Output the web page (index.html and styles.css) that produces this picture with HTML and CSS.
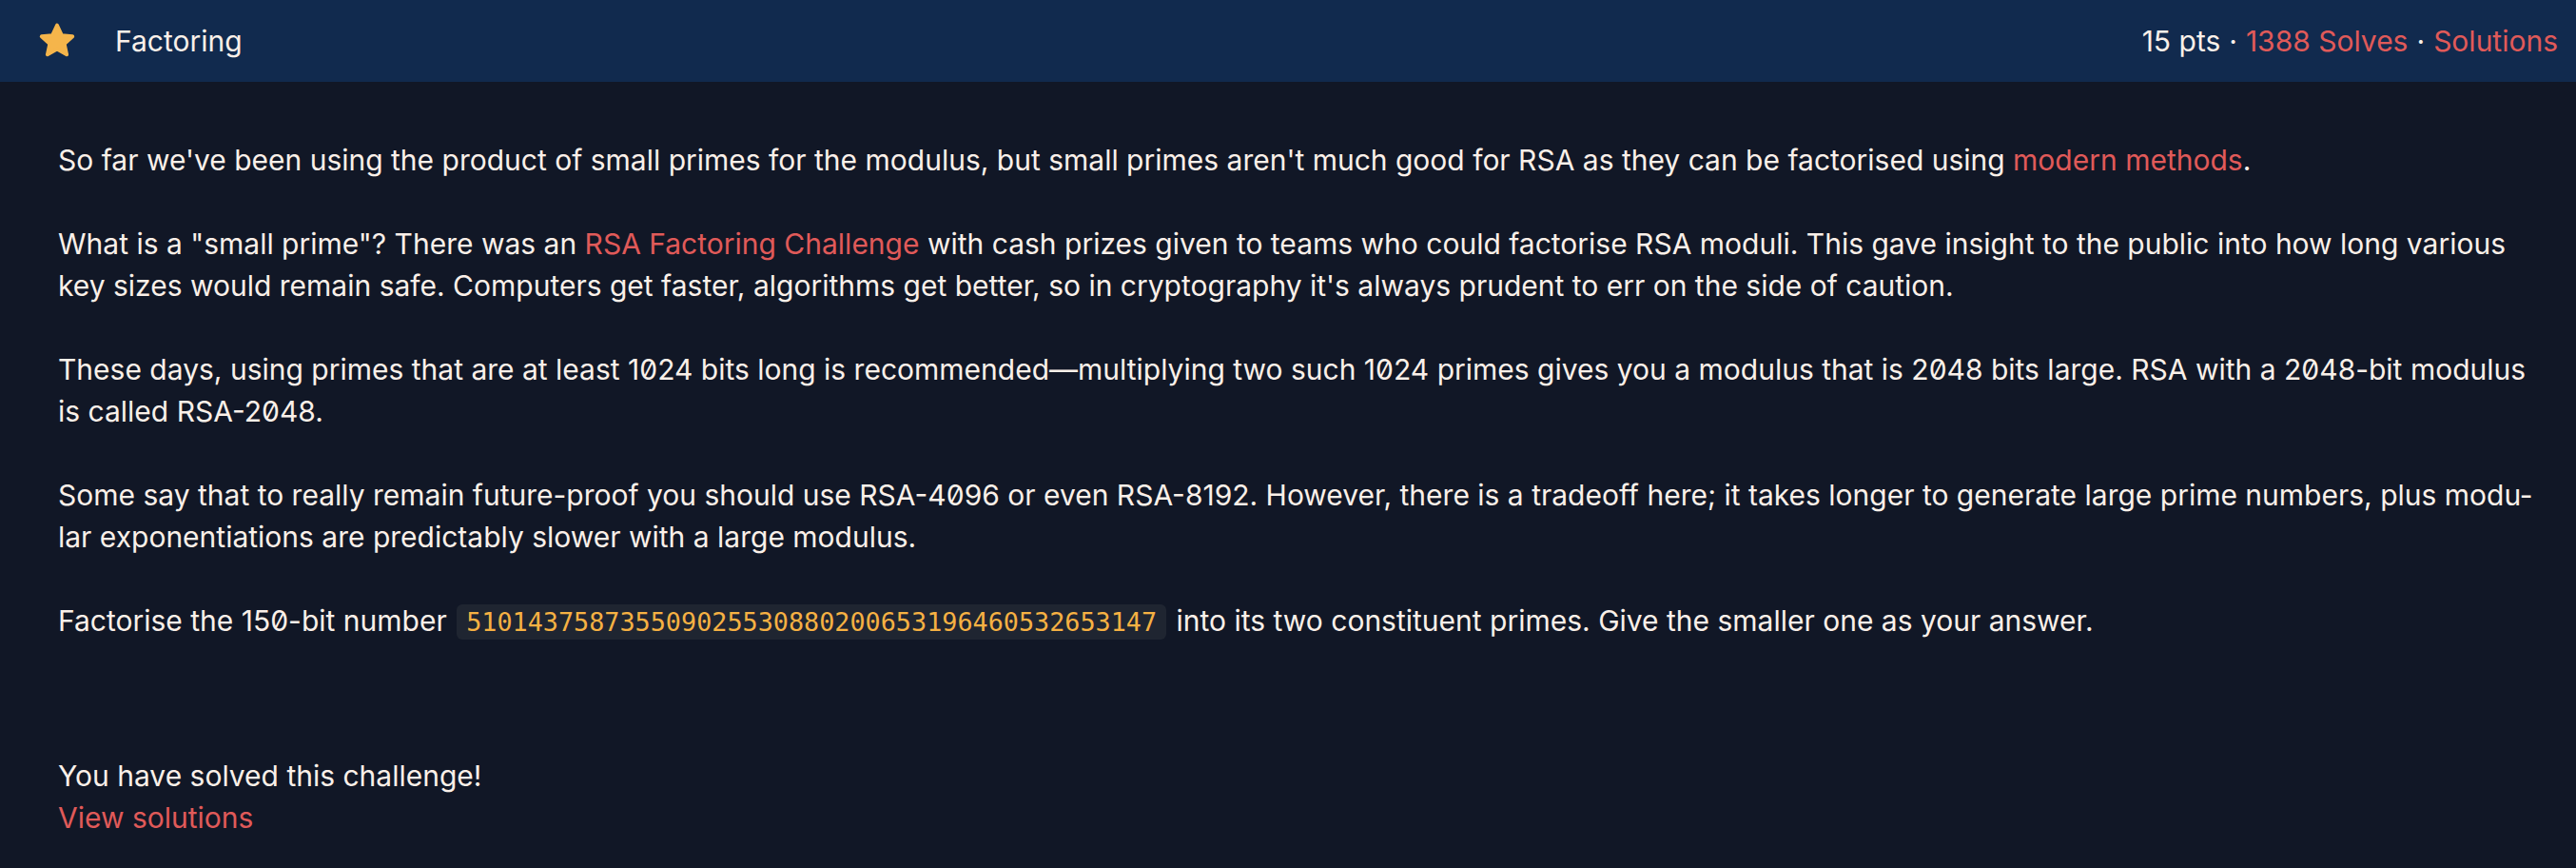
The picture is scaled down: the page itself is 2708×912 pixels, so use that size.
FILE: index.html
```html
<!DOCTYPE html>
<html lang="en">
<head>
<meta charset="utf-8">
<title>Factoring</title>
<link rel="stylesheet" href="styles.css">
</head>
<body>
<div class="card">
  <header class="card-header">
    <div class="title-group">
      <svg class="star" viewBox="0 0 24 24" aria-hidden="true">
        <polygon points="12,2.6 14.8,8.6 21.3,9.3 16.4,13.7 17.8,20.2 12,16.9 6.2,20.2 7.6,13.7 2.7,9.3 9.2,8.6" fill="#f5b54b" stroke="#f5b54b" stroke-width="2.2" stroke-linejoin="round"/>
      </svg>
      <span class="title">Factoring</span>
    </div>
    <div class="meta">
      <span>15 pts</span>
      <span class="dot">·</span>
      <a href="#" class="link">1388 Solves</a>
      <span class="dot">·</span>
      <a href="#" class="link">Solutions</a>
    </div>
  </header>
  <main class="card-body">
    <div class="description">
      <p>So far we've been using the product of small primes for the modulus, but small primes aren't much good for RSA as they can be factorised using <a href="#" class="link">modern methods</a>.</p>
      <p>What is a "small prime"? There was an <a href="#" class="link">RSA Factoring Challenge</a> with cash prizes given to teams who could factorise RSA moduli. This gave insight to the public into how long various key sizes would remain safe. Computers get faster, algorithms get better, so in cryptography it's always prudent to err on the side of caution.</p>
      <p>These days, using primes that are at least 1024 bits long is recommended—multiplying two such 1024 primes gives you a modulus that is 2048 bits large. RSA with a 2048-bit modulus is called RSA-2048.</p>
      <p>Some say that to really remain future-proof you should use RSA-4096 or even RSA-8192. However, there is a tradeoff here; it takes longer to generate large prime numbers, plus modu&shy;lar exponentiations are predictably slower with a large modulus.</p>
      <p>Factorise the 150-bit number <code class="code">510143758735509025530880200653196460532653147</code> into its two constituent primes. Give the smaller one as your answer.</p>
    </div>
    <div class="solved">
      <p class="solved-text">You have solved this challenge!</p>
      <a href="#" class="link">View solutions</a>
    </div>
  </main>
</div>
</body>
</html>
```
FILE: styles.css
```css
* { box-sizing: border-box; }

html, body {
  margin: 0;
  padding: 0;
  background: #111726;
}

body {
  font-family: Inter, "Noto Sans", sans-serif;
  color: #faf0e9;
  font-size: 30px;
  line-height: 44px;
}

.card-header {
  display: flex;
  align-items: center;
  justify-content: space-between;
  height: 86px;
  padding: 0 19px 0 39px;
  background: #112a4e;
  font-size: 30px;
}

.title-group {
  display: flex;
  align-items: center;
  gap: 40px;
}

.star {
  width: 42px;
  height: 42px;
  display: block;
}

.meta {
  display: flex;
  align-items: center;
  gap: 9px;
}

.link {
  color: #e05a59;
  text-decoration: none;
}

.card-body {
  padding: 60px 36px 0 61px;
}

.description p {
  margin: 0 0 44px;
  font-variant-numeric: slashed-zero;
  hyphens: manual;
}

.description p:last-child {
  margin-bottom: 0;
}

.code {
  font-family: "DejaVu Sans Mono", monospace;
  font-size: 26.8px;
  color: #f6b143;
  background: #1f2531;
  border-radius: 6px;
  padding: 3px 10px;
  margin: 0 2px;
}

.solved {
  margin-top: 117px;
}

.solved-text {
  margin: 0;
}
```
